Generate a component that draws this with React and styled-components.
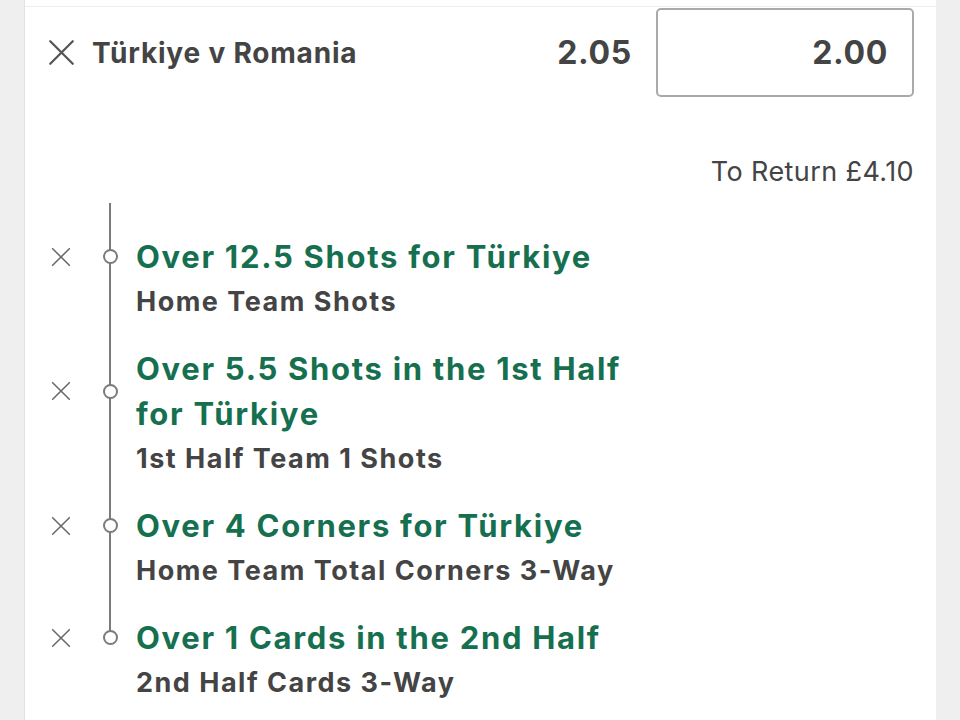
import React from 'react';
import styled, { createGlobalStyle } from 'styled-components';

const GlobalStyle = createGlobalStyle`
  body {
    margin: 0;
    background: #efefef;
    font-family: Inter, "Liberation Sans", Arial, sans-serif;
    -webkit-font-smoothing: antialiased;
  }
`;

const Page = styled.div`
  padding: 0 24px;
`;

const Card = styled.div`
  background: #fff;
  border-left: 1px solid #e2e2e2;
  min-height: 720px;
  padding: 0 22px;
`;

const TopRule = styled.div`
  height: 6px;
  border-bottom: 1px solid #ededed;
  margin: 0 -22px;
`;

const Header = styled.div`
  display: flex;
  align-items: center;
  margin-top: 1px;
`;

const Title = styled.div`
  flex: 1;
  margin-left: 17px;
  font-size: 28px;
  letter-spacing: 0.8px;
  font-weight: 700;
  color: #444;
`;

const Odds = styled.div`
  font-size: 32px;
  letter-spacing: 0.7px;
  font-weight: 700;
  color: #444;
  margin-right: 24px;
`;

const StakeBox = styled.div`
  width: 258px;
  height: 89px;
  box-sizing: border-box;
  border: 2px solid #aaa;
  border-radius: 5px;
  display: flex;
  align-items: center;
  justify-content: flex-end;
  padding-right: 24px;
  font-size: 32px;
  letter-spacing: 0.7px;
  font-weight: 700;
  color: #444;
`;

const Returns = styled.div`
  margin-top: 60px;
  text-align: right;
  font-size: 27px;
  letter-spacing: 0.4px;
  line-height: 30px;
  color: #444;
`;

const Lead = styled.div`
  margin-left: 62px;
  margin-top: 16px;
  height: 31px;
  border-left: 2px solid #7b7b7b;
`;

const Leg = styled.div`
  position: relative;
  padding-bottom: ${p => (p.$last ? 0 : 22)}px;

  &::before {
    content: '';
    position: absolute;
    left: 62px;
    top: 0;
    width: 2px;
    background: #7b7b7b;
    ${p => (p.$last ? 'height: 16px;' : 'bottom: 0;')}
  }
`;

const LegHead = styled.div`
  display: flex;
  align-items: center;
`;

const IconCell = styled.div`
  width: 28px;
  display: flex;
  justify-content: center;
`;

const Dot = styled.span`
  position: relative;
  z-index: 1;
  box-sizing: border-box;
  width: 15px;
  height: 15px;
  margin-left: 28px;
  border: 2px solid #7b7b7b;
  border-radius: 50%;
  background: #fff;
`;

const Selection = styled.div`
  margin-left: 18px;
  font-size: 31px;
  letter-spacing: 1.7px;
  line-height: 45px;
  font-weight: 700;
  color: #16704f;
`;

const Market = styled.div`
  margin-left: 89px;
  font-size: 27px;
  letter-spacing: 1.5px;
  line-height: 45px;
  font-weight: 700;
  color: #444;
`;

const Cross = ({ size, stroke, color }) => (
  <svg width={size} height={size} viewBox="0 0 24 24" fill="none">
    <path d="M2 2 L22 22 M22 2 L2 22" stroke={color} strokeWidth={stroke} strokeLinecap="round" />
  </svg>
);

const legs = [
  { sel: ['Over 12.5 Shots for Türkiye'], market: 'Home Team Shots' },
  { sel: ['Over 5.5 Shots in the 1st Half', 'for Türkiye'], market: '1st Half Team 1 Shots' },
  { sel: ['Over 4 Corners for Türkiye'], market: 'Home Team Total Corners 3-Way' },
  { sel: ['Over 1 Cards in the 2nd Half'], market: '2nd Half Cards 3-Way' },
];

export default function App() {
  return (
    <>
      <GlobalStyle />
      <Page>
        <Card>
          <TopRule />
          <Header>
            <IconCell>
              <Cross size={27} stroke={2} color="#555" />
            </IconCell>
            <Title>Türkiye v Romania</Title>
            <Odds>2.05</Odds>
            <StakeBox>2.00</StakeBox>
          </Header>
          <Returns>To Return £4.10</Returns>
          <Lead />
          {legs.map((leg, i) => (
            <Leg key={i} $last={i === legs.length - 1}>
              <LegHead>
                <IconCell>
                  <Cross size={20} stroke={1.8} color="#666" />
                </IconCell>
                <Dot />
                <Selection>
                  {leg.sel.map((line, j) => (
                    <div key={j}>{line}</div>
                  ))}
                </Selection>
              </LegHead>
              <Market>{leg.market}</Market>
            </Leg>
          ))}
        </Card>
      </Page>
    </>
  );
}
